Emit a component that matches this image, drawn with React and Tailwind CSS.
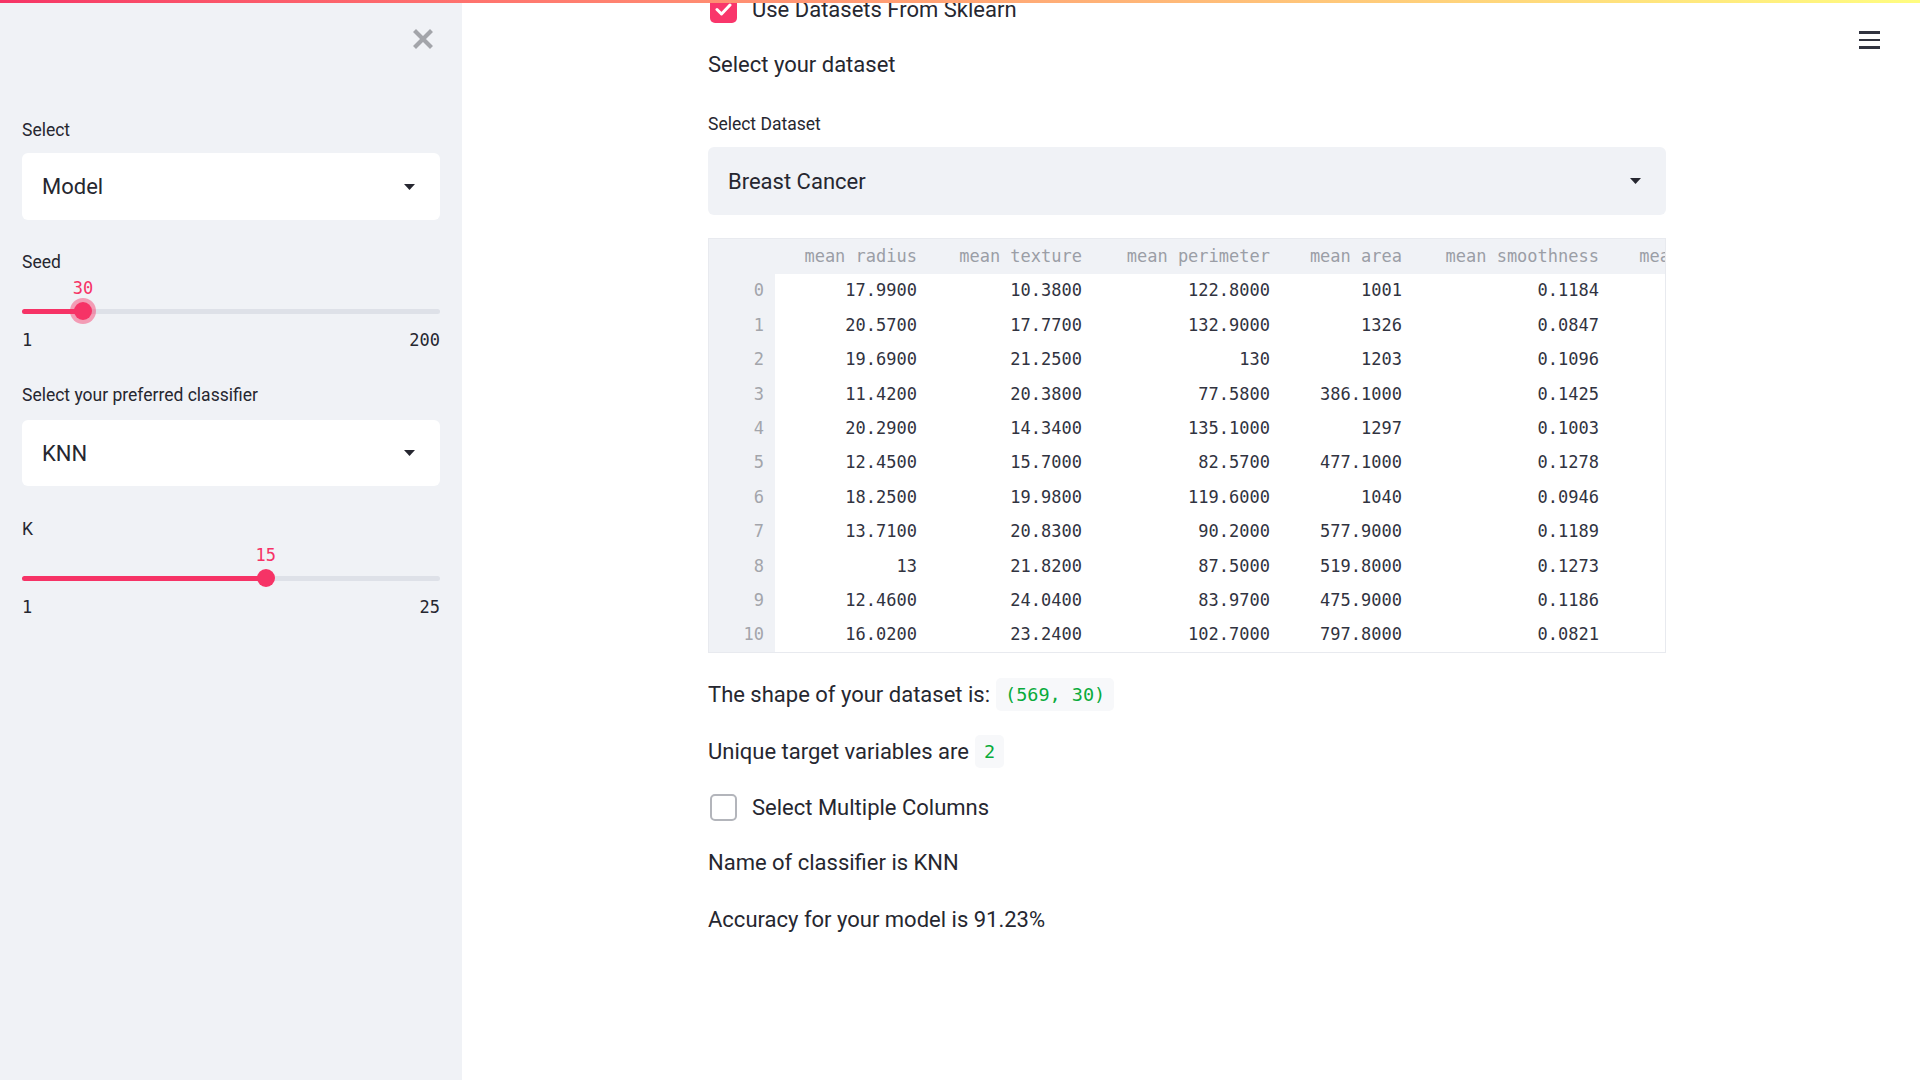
import React from 'react';

const rows = [
  ['17.9900', '10.3800', '122.8000', '1001', '0.1184', '0.2776'],
  ['20.5700', '17.7700', '132.9000', '1326', '0.0847', '0.0786'],
  ['19.6900', '21.2500', '130', '1203', '0.1096', '0.1599'],
  ['11.4200', '20.3800', '77.5800', '386.1000', '0.1425', '0.2839'],
  ['20.2900', '14.3400', '135.1000', '1297', '0.1003', '0.1328'],
  ['12.4500', '15.7000', '82.5700', '477.1000', '0.1278', '0.1700'],
  ['18.2500', '19.9800', '119.6000', '1040', '0.0946', '0.1090'],
  ['13.7100', '20.8300', '90.2000', '577.9000', '0.1189', '0.1645'],
  ['13', '21.8200', '87.5000', '519.8000', '0.1273', '0.1932'],
  ['12.4600', '24.0400', '83.9700', '475.9000', '0.1186', '0.2396'],
  ['16.0200', '23.2400', '102.7000', '797.8000', '0.0821', '0.0669'],
];

const columns = ['mean radius', 'mean texture', 'mean perimeter', 'mean area', 'mean smoothness', 'mean compactness'];
const colWidths = [162, 165, 188, 132, 197, 204];

const Caret = () => (
  <svg width="11" height="6" viewBox="0 0 11 6">
    <path d="M0 0 L11 0 L5.5 6 Z" fill="#262730" />
  </svg>
);

const SelectBox = ({ value, bg }) => (
  <div className={`flex items-center justify-between rounded-[6px] pl-[20px] pr-[25px] ${bg}`}>
    <span className="text-[22px] text-[#262730]">{value}</span>
    <Caret />
  </div>
);

// value label and thumb sit over the track
const Slider = ({ min, max, value, focused }) => {
  const pct = ((value - min) / (max - min)) * 100;
  return (
    <div>
      <div className="relative h-[20px]">
        <span
          className="absolute top-0 -translate-x-1/2 text-[17px] leading-[20px] text-[#f63366] [font-family:'DejaVu_Sans_Mono',monospace]"
          style={{ left: `${pct}%` }}
        >
          {value}
        </span>
      </div>
      <div className="relative flex h-[26px] items-center">
        <div className="h-[5px] w-full rounded-full bg-[#dee1e8]">
          <div className="h-full rounded-full bg-[#f63366]" style={{ width: `${pct}%` }} />
        </div>
        <div
          className={`absolute top-1/2 h-[18px] w-[18px] -translate-x-1/2 -translate-y-1/2 rounded-full bg-[#f63366] ${
            focused ? 'shadow-[0_0_0_4px_rgba(246,51,102,0.45)]' : ''
          }`}
          style={{ left: `${pct}%` }}
        />
      </div>
      <div className="mt-[7px] flex h-[20px] items-center justify-between text-[17px] text-[#262730] [font-family:'DejaVu_Sans_Mono',monospace]">
        <span>{min}</span>
        <span>{max}</span>
      </div>
    </div>
  );
};

const Checkbox = ({ checked }) =>
  checked ? (
    <div className="flex h-[27px] w-[27px] items-center justify-center rounded-[5px] bg-[#f9366b]">
      <svg width="17" height="13" viewBox="0 0 17 13">
        <path d="M2 6.5 L6.5 11 L15 2" fill="none" stroke="white" strokeWidth="3" strokeLinecap="round" strokeLinejoin="round" />
      </svg>
    </div>
  ) : (
    <div className="h-[27px] w-[27px] rounded-[5px] border-2 border-[#b3b5bb] bg-white" />
  );

const Code = ({ children }) => (
  <span className="flex h-[33px] items-center rounded-[5px] bg-[#f7f8fa] px-[9px] text-[18.5px] text-[#09ab3b] [font-family:'DejaVu_Sans_Mono',monospace]">
    {children}
  </span>
);

export default function App() {
  return (
    <div className="relative flex h-[1080px] w-full overflow-hidden bg-white text-[#262730] [font-family:Roboto,sans-serif]">
      <div className="absolute left-0 right-0 top-0 z-10 h-[3px] bg-linear-to-r from-[#f63366] to-[#fffd80]" />

      {/* Sidebar */}
      <aside className="w-[462px] shrink-0 bg-[#f0f2f6] px-[22px]">
        <div className="flex h-[78px] items-center justify-end">
          <svg className="mr-[7px]" width="20" height="20" viewBox="0 0 20 20">
            <path d="M3 3 L17 17 M17 3 L3 17" stroke="#a3a5aa" strokeWidth="4.2" strokeLinecap="square" />
          </svg>
        </div>

        <div className="mt-[40px] h-[24px] text-[17.5px] leading-[24px]">Select</div>
        <div className="mt-[11px] h-[67px] [&>div]:h-full">
          <SelectBox value="Model" bg="bg-white" />
        </div>

        <div className="mt-[30px] h-[24px] text-[17.5px] leading-[24px]">Seed</div>
        <div className="mt-[4px]">
          <Slider min={1} max={200} value={30} focused />
        </div>

        <div className="mt-[32px] h-[24px] text-[17.5px] leading-[24px]">Select your preferred classifier</div>
        <div className="mt-[13px] h-[66px] [&>div]:h-full">
          <SelectBox value="KNN" bg="bg-white" />
        </div>

        <div className="mt-[31px] h-[24px] text-[17.5px] leading-[24px]">K</div>
        <div className="mt-[4px]">
          <Slider min={1} max={25} value={15} />
        </div>
      </aside>

      {/* Main */}
      <main className="relative flex-1">
        <div className="absolute right-[40px] top-[31px] flex w-[21px] flex-col gap-[5px]">
          <div className="h-[2.5px] bg-[#31333f]" />
          <div className="h-[2.5px] bg-[#31333f]" />
          <div className="h-[2.5px] bg-[#31333f]" />
        </div>

        <div className="ml-[246px] w-[958px]">
          <div className="-mt-[7px] flex h-[32px] items-center gap-[15px] pl-[2px]">
            <Checkbox checked />
            <span className="text-[22px]">Use Datasets From Sklearn</span>
          </div>

          <div className="mt-[24px] h-[32px] text-[22px] leading-[32px]">Select your dataset</div>

          <div className="mt-[31px] h-[24px] text-[17.5px] leading-[24px]">Select Dataset</div>
          <div className="mt-[11px] h-[68px] [&>div]:h-full">
            <SelectBox value="Breast Cancer" bg="bg-[#f0f2f6]" />
          </div>

          <div className="mt-[23px] overflow-hidden border border-[#e8eaef]">
            <table className="table-fixed border-collapse text-[17px] [font-family:'DejaVu_Sans_Mono',monospace]" style={{ width: 66 + colWidths.reduce((a, b) => a + b, 0) }}>
              <colgroup>
                <col style={{ width: 66 }} />
                {colWidths.map((w, i) => (
                  <col key={i} style={{ width: w }} />
                ))}
              </colgroup>
              <thead>
                <tr className="h-[35px] bg-[#f0f2f6] text-[#9b9ea6]">
                  <th />
                  {columns.map((c) => (
                    <th key={c} className="whitespace-nowrap pr-[20px] text-right font-normal">
                      {c}
                    </th>
                  ))}
                </tr>
              </thead>
              <tbody>
                {rows.map((r, i) => (
                  <tr key={i} className="h-[34.4px]">
                    <td className="bg-[#f0f2f6] pr-[11px] text-right text-[#a3a5ab]">{i}</td>
                    {r.map((v, j) => (
                      <td key={j} className="whitespace-nowrap pr-[20px] text-right text-[#31333f]">
                        {v}
                      </td>
                    ))}
                  </tr>
                ))}
              </tbody>
            </table>
          </div>

          <div className="mt-[25px] flex h-[33px] items-center gap-[6px] text-[22px]">
            <span>The shape of your dataset is:</span>
            <Code>(569, 30)</Code>
          </div>

          <div className="mt-[24px] flex h-[33px] items-center gap-[6px] text-[22px]">
            <span>Unique target variables are</span>
            <Code>2</Code>
          </div>

          <div className="mt-[25px] flex h-[28px] items-center gap-[15px] pl-[2px]">
            <Checkbox />
            <span className="text-[22px]">Select Multiple Columns</span>
          </div>

          <div className="mt-[26px] h-[32px] text-[22px] leading-[32px]">Name of classifier is KNN</div>
          <div className="mt-[25px] h-[32px] text-[22px] leading-[32px]">Accuracy for your model is 91.23%</div>
        </div>
      </main>
    </div>
  );
}
